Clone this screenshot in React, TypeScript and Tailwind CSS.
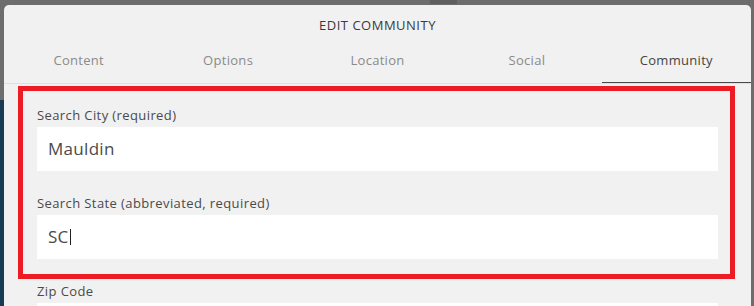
import React from "react";

const tabs = ["Content", "Options", "Location", "Social", "Community"];

function Field({ label, value, caret }: { label: string; value: string; caret?: boolean }) {
  return (
    <div className="flex flex-col shrink-0">
      <div className="h-[16px] leading-[16px] text-[13px] tracking-[0.4px] text-[#4a4a4a]">{label}</div>
      <div className="mt-[4px] h-[44px] shrink-0 bg-white flex items-center pl-[11px] text-[17px] tracking-[0.3px] text-[#4a4a4a]">
        <span>{value}</span>
        {caret && <span className="ml-[1px] w-px h-[16px] bg-[#222]" />}
      </div>
    </div>
  );
}

export default function App() {
  return (
    <div
      className="relative w-[754px] h-[306px] overflow-hidden bg-[#6d6d6d] flex flex-col"
      style={{ fontFamily: '"Open Sans", "Noto Sans", sans-serif' }}
    >
      <div className="h-[5px] shrink-0 flex">
        <div className="ml-[430px] w-[27px] h-[4px] bg-[#5f5f5f]" />
      </div>
      <div className="flex flex-1 min-h-0">
        <div className="w-[4px] shrink-0 flex flex-col">
          <div className="h-[95px] shrink-0 bg-[#6d6d6d]" />
          <div className="flex-1 bg-[#173a55]" />
        </div>
        <div className="flex-1 rounded-t-[5px] bg-[#f1f1f1] flex flex-col overflow-hidden">
          <div className="h-[42px] shrink-0 flex items-center justify-center text-[13px] text-[#3a3a3a] tracking-[0.5px]">
            EDIT COMMUNITY
          </div>
          <div className="flex shrink-0 border-b border-[#e0e0e0]">
            {tabs.map((t) => (
              <div
                key={t}
                className={
                  "flex-1 h-[36px] pt-[4px] flex items-start justify-center text-[13px] leading-[18px] tracking-[0.3px] " +
                  (t === "Community"
                    ? "text-[#444] border-b border-[#4a4a4a] -mb-px"
                    : "text-[#8a8a8a]")
                }
              >
                {t}
              </div>
            ))}
          </div>
          <div className="px-[33px] pt-[23px] flex flex-col gap-[24px]">
            <Field label="Search City (required)" value="Mauldin" />
            <Field label="Search State (abbreviated, required)" value="SC" caret />
            <Field label="Zip Code" value="" />
          </div>
        </div>
        <div className="w-[3px] shrink-0 bg-[#6d6d6d]" />
      </div>
      <div className="absolute left-[18px] top-[86px] w-[717px] h-[193px] border-[5px] border-[#ed1c24]" />
    </div>
  );
}
